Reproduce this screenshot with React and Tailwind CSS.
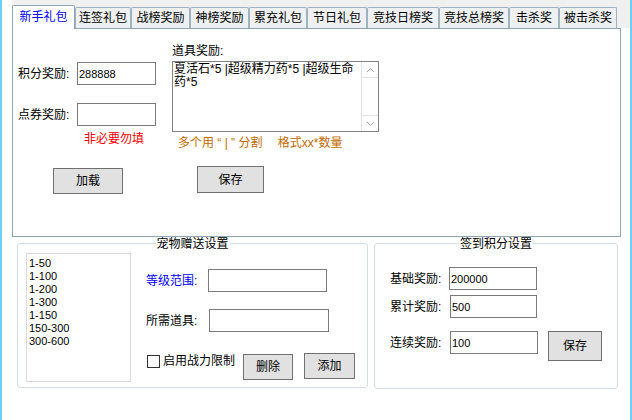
import React from 'react';

const tabs = [
  { name: '新手礼包', w: 'w-[63px]', active: true },
  { name: '连签礼包', w: 'w-[56px]' },
  { name: '战榜奖励', w: 'w-[59px]' },
  { name: '神榜奖励', w: 'w-[59px]' },
  { name: '累充礼包', w: 'w-[58px]' },
  { name: '节日礼包', w: 'w-[60px]' },
  { name: '竞技日榜奖', w: 'w-[72px]' },
  { name: '竞技总榜奖', w: 'w-[70px]' },
  { name: '击杀奖', w: 'w-[50px]' },
  { name: '被击杀奖', w: 'w-[58px]' },
];

const levels = ['1-50', '1-100', '1-200', '1-300', '1-150', '150-300', '300-600'];

const Field = ({ value = '', className = '' }) => (
  <input
    readOnly
    value={value}
    className={`h-[23px] border border-[#7a7a7a] bg-white px-[1px] text-[11px] text-black outline-none ${className}`}
  />
);

const Btn = ({ children, className = '' }) => (
  <button className={`border border-[#707070] bg-[#e1e1e1] text-[12px] leading-none text-black ${className}`}>
    {children}
  </button>
);

const GroupBox = ({ title, className = '', children }) => (
  <div className={`relative rounded-[3px] border border-[#d5dde3] ${className}`}>
    <span className="absolute left-1/2 -top-[7px] -translate-x-1/2 bg-white px-[1px] text-[12px] leading-[14px] text-black whitespace-nowrap">
      {title}
    </span>
    {children}
  </div>
);

const Chevron = ({ up }) => (
  <svg width="9" height="6" viewBox="0 0 9 6">
    <path d={up ? 'M1 5 L4.5 1.5 L8 5' : 'M1 1 L4.5 4.5 L8 1'} fill="none" stroke="#a6a6a6" strokeWidth="1" />
  </svg>
);

export default function App() {
  return (
    <div className="flex h-[420px] w-[632px] flex-col border-x-2 border-[#6dcff6] bg-white font-['Liberation_Sans','Noto_Sans_CJK_SC',sans-serif] text-[12px] text-black">
      {/* tab control */}
      <div className="ml-[10px]">
        <div className="flex h-[28px] items-end bg-[#f0f0f0]">
          {tabs.map((t) =>
            t.active ? (
              <div
                key={t.name}
                className={`relative z-10 -mb-px flex h-[24px] items-center justify-center rounded-t-[2px] border border-b-0 border-[#8fa4b4] bg-white pb-[2px] text-[12px] text-[#0000ff] ${t.w}`}
              >
                {t.name}
              </div>
            ) : (
              <div
                key={t.name}
                className={`flex h-[21px] items-center justify-center rounded-t-[2px] border border-b-0 border-[#9fb2c0] bg-[#eef0f2] text-[12px] ${t.w}`}
              >
                {t.name}
              </div>
            )
          )}
        </div>
        <div className="flex h-[209px] w-[609px] border border-[#8fa4b4] bg-white">
          <div className="w-[159px] pl-[5px] pt-[33px]">
            <div className="flex items-center">
              <span className="w-[59px] leading-[16px]">积分奖励:</span>
              <Field value="288888" className="w-[79px]" />
            </div>
            <div className="mt-[18px] flex items-center">
              <span className="w-[59px] leading-[16px]">点券奖励:</span>
              <Field className="w-[79px]" />
            </div>
            <div className="ml-[66px] mt-[6px] leading-[14px] text-[#ff0000]">非必要勿填</div>
            <Btn className="ml-[35px] mt-[22px] h-[26px] w-[70px]">加载</Btn>
          </div>
          <div className="pt-[14px]">
            <div className="leading-[16px]">道具奖励:</div>
            <div className="mt-[2px] flex h-[71px] w-[207px] border border-[#828282] bg-white">
              <div className="flex-1 pl-[1px] pt-[1px] text-[12px] leading-[13px]">
                夏活石*5 |超级精力药*5 |超级生命
                <br />
                药*5
              </div>
              <div className="flex w-[17px] flex-col border-l border-[#e3e3e3]">
                <div className="flex h-[16px] items-center justify-center border-b border-[#e3e3e3]">
                  <Chevron up />
                </div>
                <div className="flex-1" />
                <div className="flex h-[16px] items-center justify-center border-t border-[#e3e3e3]">
                  <Chevron />
                </div>
              </div>
            </div>
            <div className="ml-[6px] mt-[4px] whitespace-pre leading-[14px] text-[#c46a00]">多个用 “ | ” 分割　 格式xx*数量</div>
            <Btn className="ml-[25px] mt-[16px] h-[27px] w-[67px]">保存</Btn>
          </div>
        </div>
      </div>

      {/* bottom settings */}
      <div className="ml-[15px] mt-[6px] flex gap-[6px]">
        <GroupBox title="宠物赠送设置" className="flex h-[145px] w-[351px] pl-[8px] pt-[9px]">
          <div className="h-[129px] w-[105px] border border-[#dadada] pl-[2px] pt-[3px] text-[11px] leading-[13px]">
            {levels.map((l) => (
              <div key={l}>{l}</div>
            ))}
          </div>
          <div className="ml-[15px] pt-[16px]">
            <div className="flex items-center">
              <span className="w-[62px] leading-[16px] text-[#0000ff]">等级范围:</span>
              <Field className="w-[119px]" />
            </div>
            <div className="mt-[17px] flex items-center">
              <span className="w-[63px] leading-[16px]">所需道具:</span>
              <Field className="w-[120px]" />
            </div>
            <div className="mt-[21px] flex items-start">
              <div className="flex w-[97px] items-center pt-[1px]">
                <span className="ml-[1px] h-[13px] w-[13px] border border-[#333333] bg-white" />
                <span className="ml-[3px] leading-[14px]">启用战力限制</span>
              </div>
              <Btn className="mt-[1px] h-[26px] w-[50px]">删除</Btn>
              <Btn className="ml-[11px] h-[26px] w-[51px]">添加</Btn>
            </div>
          </div>
        </GroupBox>
        <GroupBox title="签到积分设置" className="h-[146px] w-[244px] pl-[15px] pt-[23px]">
          <div className="flex items-center">
            <span className="w-[59px] leading-[16px]">基础奖励:</span>
            <Field value="200000" className="w-[88px]" />
          </div>
          <div className="mt-[5px] flex items-center">
            <span className="w-[60px] leading-[16px]">累计奖励:</span>
            <Field value="500" className="w-[87px]" />
          </div>
          <div className="mt-[13px] flex items-start">
            <span className="flex h-[23px] w-[60px] items-center leading-[16px]">连续奖励:</span>
            <Field value="100" className="w-[88px]" />
            <Btn className="ml-[10px] h-[30px] w-[54px]">保存</Btn>
          </div>
        </GroupBox>
      </div>
    </div>
  );
}
